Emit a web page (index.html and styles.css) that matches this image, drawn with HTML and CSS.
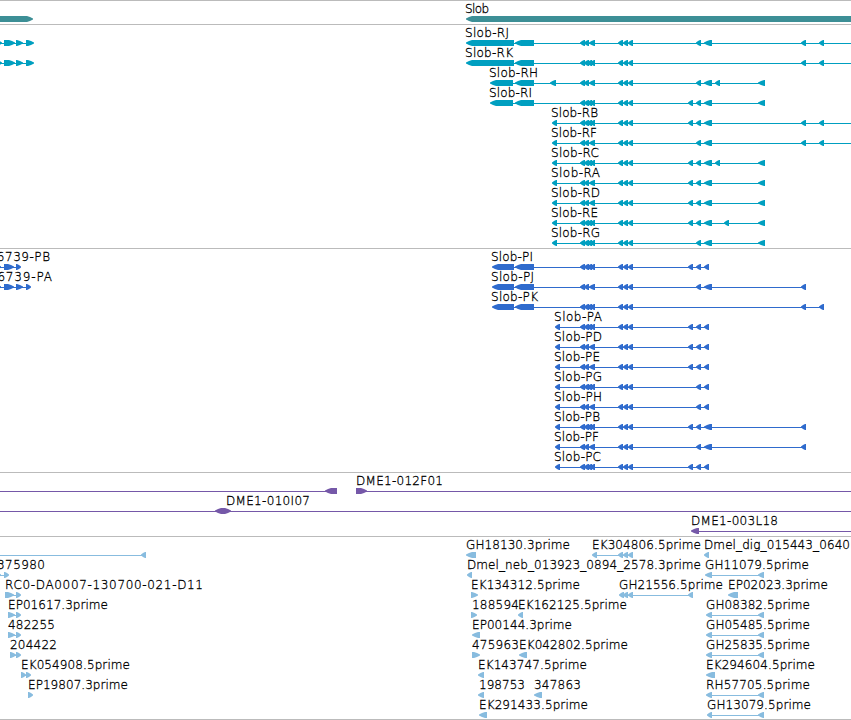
FILE: index.html
```html
<!doctype html>
<html lang="en">

<head>
    <meta charset="UTF-8">
    <meta name="viewport" content="width=device-width, initial-scale=1.0">
    <title>Slob - Genome Browser</title>
    <link rel="stylesheet" href="styles.css">
</head>

<body>
    <main class="browser">
        <svg class="track gene" id="gene"></svg>
        <svg class="track transcript" id="transcript"></svg>
        <svg class="track protein" id="protein"></svg>
        <svg class="track bac" id="bac"></svg>
        <svg class="track est" id="est"></svg>
    </main>
    <script src="tracks.js"></script>
</body>

</html>
```
FILE: styles.css
```css
body {
    margin: 0;
    background-color: #fff;
    overflow: hidden;
}

.browser {
    display: flex;
    flex-direction: column;
    height: 719px;
    border-bottom: 1px solid #bbb;
}

.track {
    display: block;
    flex: none;
    box-sizing: border-box;
    width: 100%;
    border-top: 1px solid #bbb;
    font-family: "DejaVu Sans", sans-serif;
    font-size: 12px;
    font-weight: 200;
}

.track text {
    fill: #000;
    stroke: #000;
    stroke-width: 0.3px;
}

.gene {
    height: 24px;
    color: #3d8f96;
}

.transcript {
    height: 224px;
    color: #009fc0;
}

.protein {
    height: 224px;
    color: #2f6bcd;
}

.bac {
    height: 64px;
    color: #7558a8;
}

.est {
    height: 183px;
    color: #88bcdf;
}

.feature,
.line {
    fill: currentColor;
}
```
FILE: tracks.js
```js
const ROW_HEIGHT = 20;
const SVG_NS = 'http://www.w3.org/2000/svg';

// exons shared by most of the Slob isoforms
const A = [[580, 585], [584, 589], [589, 595]];
const B = [[580, 585], [584, 589], [587, 592], [590, 595]];
const C = [[618, 623], [623, 628], [628, 633]];
const E688 = [688, 693];
const E696 = [696, 701];
const E704 = [704, 712];
const P704 = [704, 709];
const E715 = [715, 720];
const E758 = [758, 765];
const E801 = [801, 806];
const E819 = [819, 824];

// item: row, label, label x, label width, line start, line end, exons, direction
const tracks = {
    gene: [
        [0, '', 0, 0, 0, 0, [[-20, 33]], 'r'],
        [0, 'Slob', 465, 24, 0, 0, [[466, 870]], 'l']
    ],
    transcript: [
        [0, '', 0, 0, 0, 30, [[-4, 2], [4, 15], [16, 23], [26, 34]], 'r'],
        [1, '', 0, 0, 0, 30, [[-4, 2], [4, 15], [16, 23], [26, 34]], 'r'],
        [0, 'Slob-RJ', 465, 44, 468, 851, [[466, 514], [515, 534], ...A, ...C, E696, E704, E801, E819], 'l'],
        [1, 'Slob-RK', 465, 48, 468, 851, [[466, 514], [515, 534], ...B, ...C, E801, E819], 'l'],
        [2, 'Slob-RH', 489, 49, 492, 764, [[490, 513], [515, 534], [550, 556], ...A, ...C, E696, E704, E715, E758], 'l'],
        [3, 'Slob-RI', 489, 43, 492, 764, [[490, 513], [515, 534], ...B, ...C, E688, E696, E704, E758], 'l'],
        [4, 'Slob-RB', 551, 47, 553, 851, [[552, 557], ...B, ...C, E688, E696, E704, E801, E819], 'l'],
        [5, 'Slob-RF', 551, 46, 553, 851, [[552, 557], ...A, ...C, E696, E704, E801, E819], 'l'],
        [6, 'Slob-RC', 551, 48, 553, 764, [[552, 557], ...B, ...C, E688, E696, E704, E715, E758], 'l'],
        [7, 'Slob-RA', 551, 49, 553, 764, [[552, 557], ...A, ...C, E688, E696, E704, E758], 'l'],
        [8, 'Slob-RD', 551, 49, 553, 764, [[552, 557], ...A, ...C, E688, E696, E704, E758], 'l'],
        [9, 'Slob-RE', 551, 47, 553, 764, [[552, 557], ...B, ...C, E688, E696, E704, [724, 729], E758], 'l'],
        [10, 'Slob-RG', 551, 49, 553, 764, [[552, 557], ...B, ...C, E696, E704, E758], 'l']
    ],
    protein: [
        [0, 'CG6739-PB', -22, 72, 0, 18, [[-4, 1], [4, 14], [16, 21]], 'r'],
        [1, 'CG6739-PA', -22, 74, 0, 28, [[-4, 1], [4, 14], [16, 23], [26, 31]], 'r'],
        [0, 'Slob-PI', 491, 42, 494, 708, [[492, 514], [515, 534], ...B, ...C, E688, E696, P704], 'l'],
        [1, 'Slob-PJ', 491, 43, 494, 805, [[492, 514], [515, 534], ...A, ...C, E696, E704, E801], 'l'],
        [2, 'Slob-PK', 491, 47, 494, 823, [[492, 514], [515, 534], ...B, ...C, E801, E819], 'l'],
        [3, 'Slob-PA', 554, 48, 556, 708, [[555, 560], ...B, ...C, E688, E696, P704], 'l'],
        [4, 'Slob-PD', 554, 48, 556, 708, [[555, 560], ...A, ...C, E688, E696, P704], 'l'],
        [5, 'Slob-PE', 554, 46, 556, 708, [[555, 560], ...A, ...C, E688, E696, P704], 'l'],
        [6, 'Slob-PG', 554, 48, 556, 708, [[555, 560], ...B, ...C, E696, P704], 'l'],
        [7, 'Slob-PH', 554, 48, 556, 708, [[555, 560], ...A, ...C, E696, P704], 'l'],
        [8, 'Slob-PB', 554, 46, 556, 805, [[555, 560], ...B, ...C, E688, E696, E704, E801], 'l'],
        [9, 'Slob-PF', 554, 45, 556, 805, [[555, 560], ...A, ...C, E696, E704, E801], 'l'],
        [10, 'Slob-PC', 554, 47, 556, 708, [[555, 560], ...B, ...C, E688, E696, P704], 'l']
    ],
    bac: [
        [0, '', 0, 0, 0, 336, [[325, 337]], 'l'],
        [0, 'DME1-012F01', 356, 87, 357, 851, [[356, 367]], 'r'],
        [1, 'DME1-010I07', 226, 84, 0, 851, [[215, 231]], 'both'],
        [2, 'DME1-003L18', 691, 87, 693, 851, [[691, 699]], 'l']
    ],
    est: [
        [0, '', 0, 0, 0, 145, [[141, 146]], 'l'],
        [0, 'GH18130.3prime', 466, 104, 0, 0, [[466, 476]], 'l'],
        [0, 'EK304806.5prime', 592, 109, 594, 632, [[592, 597], ...C], 'l'],
        [0, 'Dmel_dig_015443_0640', 704, 146, 0, 0, [P704], 'l'],
        [1, '375980', -3, 48, 0, 6, [[-4, 1], [4, 9]], 'r'],
        [1, 'Dmel_neb_013923_0894_2578.3prime', 467, 234, 0, 0, [[467, 472]], 'l'],
        [1, 'GH11079.5prime', 705, 104, 707, 763, [[705, 712], [758, 764]], 'l'],
        [2, 'RC0-DA0007-130700-021-D11', 5, 198, 6, 18, [[5, 14], [16, 21]], 'r'],
        [2, 'EK134312.5prime', 471, 109, 0, 0, [[471, 478]], 'r'],
        [2, 'GH21556.5prime', 619, 104, 621, 692, [[619, 624], [623, 628], [628, 633], E688], 'l'],
        [2, 'EP02023.3prime', 728, 100, 0, 0, [[728, 738]], 'l'],
        [3, 'EP01617.3prime', 8, 100, 9, 18, [[8, 15], [16, 21]], 'r'],
        [3, '188594', 472, 47, 0, 0, [[471, 477]], 'r'],
        [3, 'EK162125.5prime', 518, 109, 0, 0, [[518, 523]], 'l'],
        [3, 'GH08382.5prime', 706, 104, 708, 763, [[706, 712], [758, 764]], 'l'],
        [4, '482255', 8, 47, 9, 18, [[8, 15], [16, 21]], 'r'],
        [4, 'EP00144.3prime', 472, 100, 0, 0, [[472, 480]], 'l'],
        [4, 'GH05485.5prime', 706, 104, 708, 763, [[706, 712], [758, 764]], 'l'],
        [5, '204422', 10, 47, 11, 18, [[10, 16], [16, 21]], 'r'],
        [5, '475963', 472, 47, 0, 0, [[472, 480]], 'r'],
        [5, 'EK042802.5prime', 519, 109, 0, 0, [[519, 527]], 'l'],
        [5, 'GH25835.5prime', 706, 104, 708, 763, [[706, 712], [758, 764]], 'l'],
        [6, 'EK054908.5prime', 21, 109, 22, 28, [[21, 26], [26, 31]], 'r'],
        [6, 'EK143747.5prime', 478, 109, 0, 0, [[478, 484]], 'l'],
        [6, 'EK294604.5prime', 706, 109, 0, 0, [[706, 715]], 'l'],
        [7, 'EP19807.3prime', 28, 100, 0, 0, [[28, 33]], 'r'],
        [7, '198753', 479, 46, 0, 0, [[478, 484]], 'l'],
        [7, '347863', 534, 47, 0, 0, [[534, 542]], 'l'],
        [7, 'RH57705.5prime', 706, 104, 708, 763, [[706, 712], [758, 764]], 'l'],
        [8, 'EK291433.5prime', 479, 109, 0, 0, [[479, 487]], 'l'],
        [8, 'GH13079.5prime', 707, 104, 709, 763, [[707, 712], [758, 764]], 'l']
    ]
};

function add(svg, name, attrs) {
    const el = document.createElementNS(SVG_NS, name);
    for (const key in attrs) {
        el.setAttribute(key, attrs[key]);
    }
    svg.appendChild(el);
    return el;
}

// a bar with one or two pointed ends, slightly rounded towards the body
function arrow(x1, x2, y, dir) {
    const head = Math.min(x2 - x1 - 1, 6);
    const mid = head * 0.5;
    let points = dir !== 'r'
        ? `${x1 + head},${y + 6} ${x1 + mid},${y + 5} ${x1},${y + 3.4} ${x1},${y + 2.6} ${x1 + mid},${y + 1} ${x1 + head},${y} `
        : `${x1},${y + 6} ${x1},${y} `;
    points += dir !== 'l'
        ? `${x2 - head},${y} ${x2 - mid},${y + 1} ${x2},${y + 2.6} ${x2},${y + 3.4} ${x2 - mid},${y + 5} ${x2 - head},${y + 6}`
        : `${x2},${y} ${x2},${y + 6}`;
    return points;
}

for (const id in tracks) {
    const svg = document.getElementById(id);
    for (const [row, label, x, width, from, to, exons, dir] of tracks[id]) {
        const top = row * ROW_HEIGHT;
        if (to > from) {
            add(svg, 'rect', { class: 'line', x: from, y: top + 18, width: to - from, height: 1 });
        }
        for (const [x1, x2] of exons) {
            add(svg, 'polygon', { class: 'feature', points: arrow(x1, x2, top + 15, dir) });
        }
        if (label) {
            add(svg, 'text', { x: x, y: top + 12, textLength: width }).textContent = label;
        }
    }
}
```
